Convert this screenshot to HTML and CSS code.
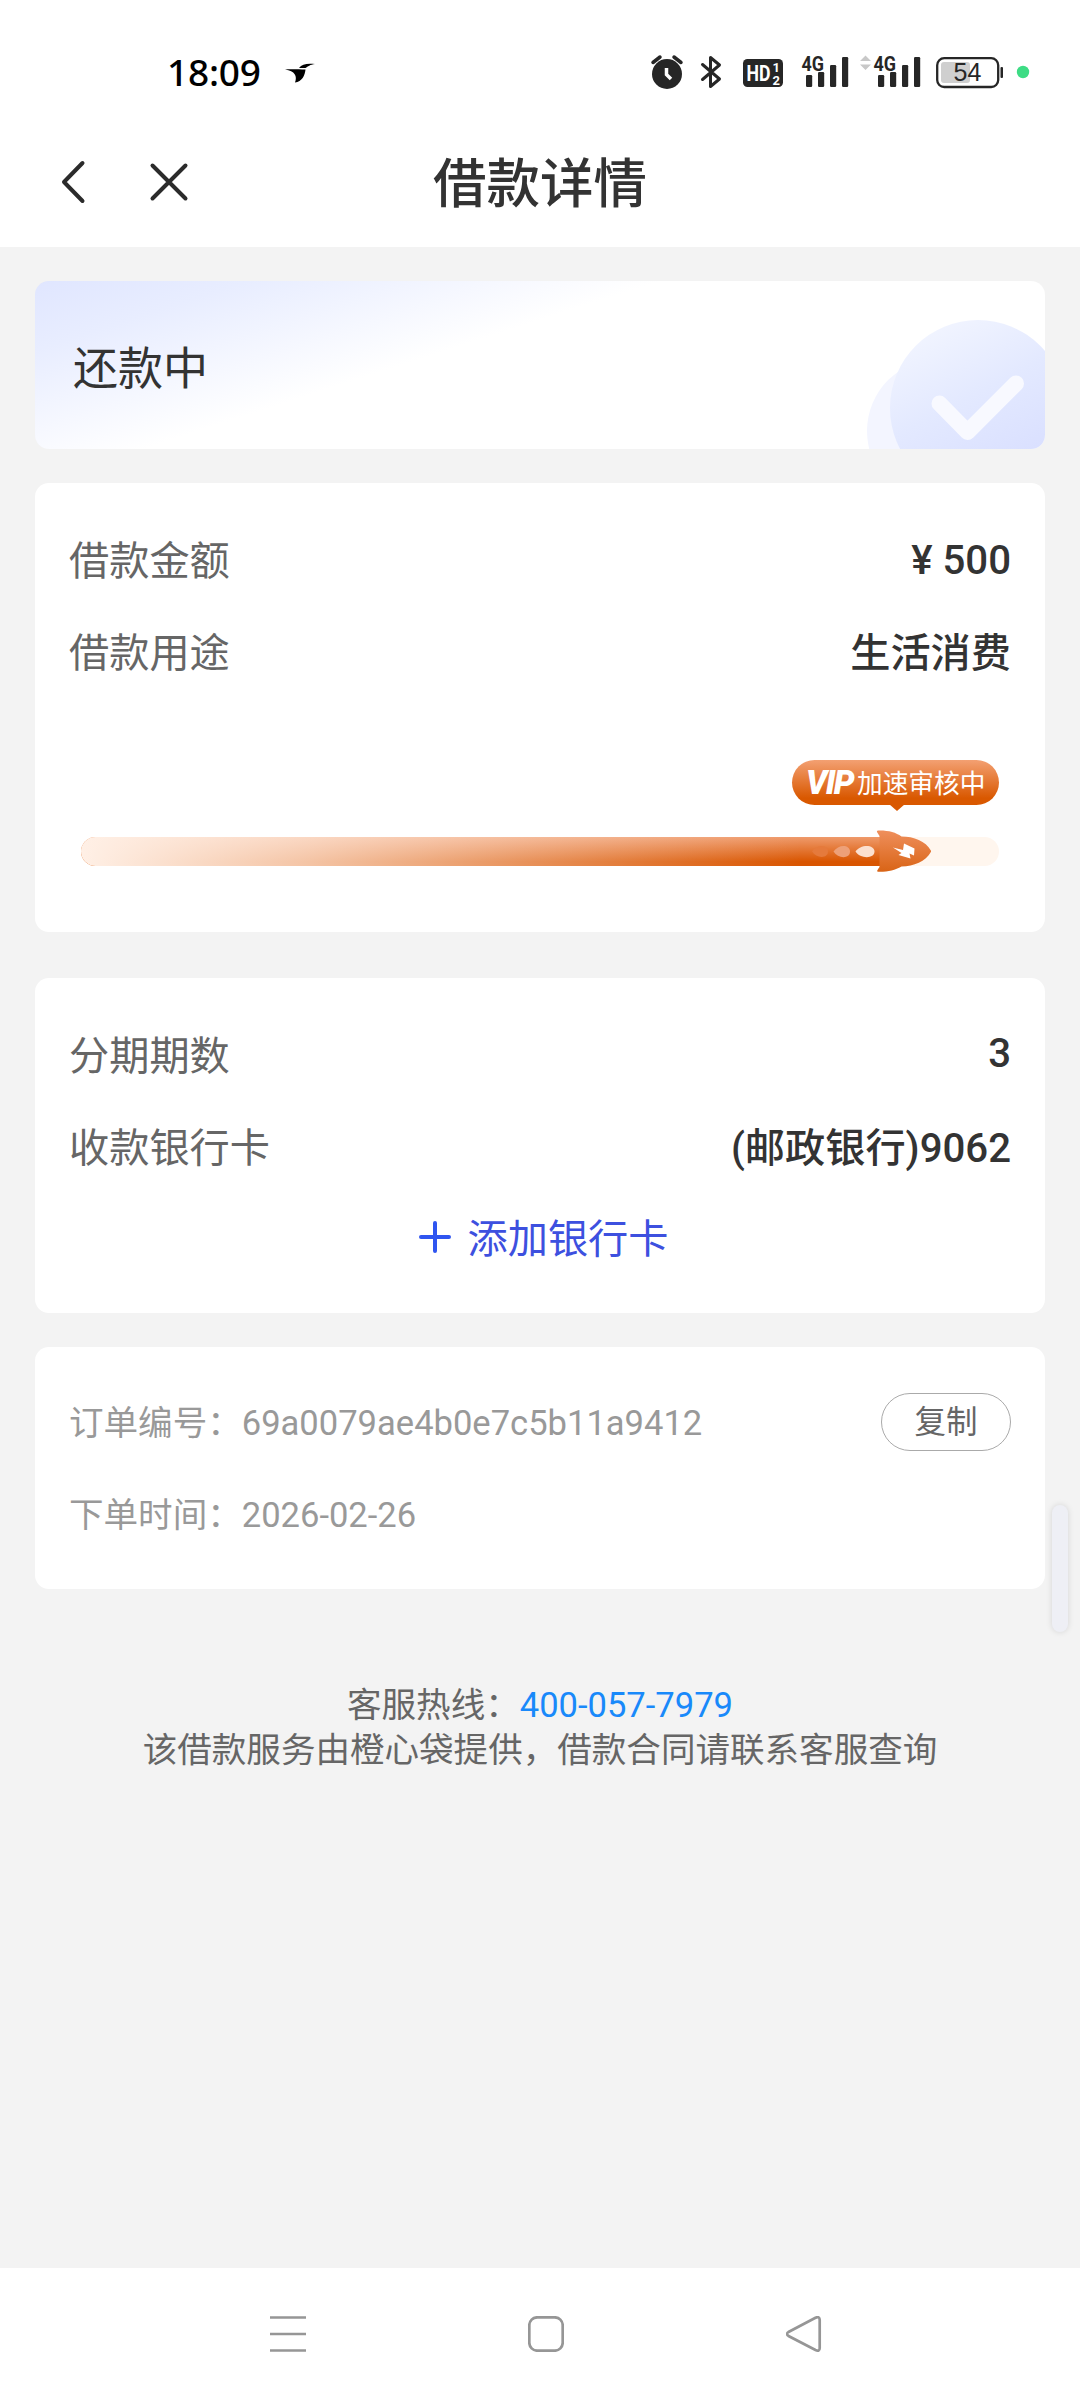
FILE: index.html
```html
<!DOCTYPE html>
<html lang="zh-CN">
<head>
<meta charset="utf-8">
<title>借款详情</title>
<link rel="stylesheet" href="styles.css">
</head>
<body>
<div class="status-bar">
  <div class="status-left">
    <span class="clock">18:09</span>
    <svg class="bird" width="30" height="20" viewBox="0 0 30 20"><path d="M0 6.500C6 6 14 6.500 20.500 6.500C20 12 17 19 10 19.500C12.500 13 10 8 0 6.500Z"/><path d="M14 5C17 1 22 .2 30 1C25 1.500 23 3.500 20.500 5Z"/></svg>
  </div>
  <svg class="status-icons" width="390" height="44" viewBox="645 50 390 44">
    <g fill="#262626">
      <circle cx="667" cy="74" r="15"/>
      <path d="M653 62.500L660 57M681 62.500L674 57" stroke="#262626" stroke-width="3.500" fill="none" stroke-linecap="round"/>
      <path d="M666.500 68V74.500L671 79" stroke="#fff" stroke-width="3.500" fill="none"/>
      <path d="M702.500 64.500L719.500 79L710.500 86.500V57.500L719.500 65L702.500 79.500" stroke="#262626" stroke-width="3" fill="none" stroke-linejoin="round" stroke-linecap="round"/>
      <rect x="743" y="59" width="40" height="28" rx="4.500"/>
      <text class="hd" x="746.500" y="81" textLength="24" lengthAdjust="spacingAndGlyphs">HD</text>
      <text class="hd-num" x="772.500" y="72">1</text>
      <text class="hd-num" x="772.500" y="84.500">2</text>
      <g id="signal">
        <text class="net" x="801.500" y="70.500" textLength="22.500" lengthAdjust="spacingAndGlyphs">4G</text>
        <rect x="806" y="75" width="6.200" height="12" rx="1.200"/><rect x="818" y="72" width="6.200" height="15" rx="1.200"/><rect x="830" y="65" width="6.200" height="22" rx="1.200"/><rect x="842" y="57" width="6.200" height="30" rx="1.200"/>
      </g>
      <use href="#signal" x="72"/>
      <path d="M860 61L865.500 55.500L871 61ZM860 64.500L865.500 70L871 64.500Z" fill="#c8c8c8"/>
      <rect x="941" y="62" width="29" height="21" rx="3" fill="#cfcfcf"/>
      <rect x="937.200" y="58.200" width="61" height="28.800" rx="7" fill="none" stroke="#262626" stroke-width="2.300"/>
      <rect x="1000.500" y="67" width="2.500" height="11" rx="1"/>
      <text class="batt" x="967.500" y="81.300" text-anchor="middle">54</text>
      <circle cx="1023" cy="72" r="6.200" fill="#3ddc84"/>
    </g>
  </svg>
</div>

<header class="nav">
  <div class="nav-actions">
    <svg width="26" height="44" viewBox="0 0 26 44"><path d="M22.500 3L4 22L22.500 41"/></svg>
    <svg width="40" height="40" viewBox="0 0 40 40"><path d="M3.500 3.500L36.500 36.500M36.500 3.500L3.500 36.500"/></svg>
  </div>
  <h1>借款详情</h1>
</header>

<main>
  <section class="banner">
    <span>还款中</span>
    <svg class="seal" width="180" height="168" viewBox="865 281 180 168">
      <defs>
        <linearGradient id="disc" x1="0.25" y1="0" x2="0.7" y2="0.85"><stop offset="0" stop-color="#f2f5ff"/><stop offset=".5" stop-color="#e3e9ff"/><stop offset="1" stop-color="#d9dfff"/></linearGradient>
      </defs>
      <circle cx="939" cy="431" r="72" fill="#f3f5ff"/>
      <circle cx="978" cy="408" r="88" fill="url(#disc)"/>
      <path d="M939.500 403.500L967.500 432L1016 383.500" fill="none" stroke="#f8f9ff" stroke-width="16" stroke-linecap="round" stroke-linejoin="round"/>
    </svg>
  </section>

  <section class="card loan">
    <div class="row"><span class="label">借款金额</span><span class="value num">¥ 500</span></div>
    <div class="row"><span class="label">借款用途</span><span class="value">生活消费</span></div>
    <div class="progress">
      <div class="bubble"><b>VIP</b><span>加速审核中</span></div>
      <div class="track"><div class="fill"></div></div>
      <svg class="rocket" width="120" height="44" viewBox="811 829 120 44">
        <defs><linearGradient id="hull" x1="0" y1="0" x2="0" y2="1"><stop offset="0" stop-color="#ef8f5c"/><stop offset="1" stop-color="#d96416"/></linearGradient></defs>
        <path d="M812 851.500C816 844.500 828 844 828 851.500S816 858.500 812 851.500Z" fill="#e57a3c"/>
        <path d="M833.500 851.500C838 844 850 844 850 851.500S838 859 833.500 851.500Z" fill="#eda078"/>
        <path d="M855.500 851.500C860 844 874.500 844 874.500 851.500S860 859 855.500 851.500Z" fill="#fbe0d0"/>
        <path d="M877 832C876.500 830.500 878 830.500 880 830.500C889 830.500 896 832.500 901.500 836.500C914 836.500 926 841 931.300 851.300C926 861.500 914 866.500 901.500 866.500C895 870 888 872 878.500 871.800C876 871.500 877.500 870 879.500 867V836Z" fill="url(#hull)"/>
        <path d="M893 847.500L903 850L904 843.500L914.500 848.500L914 855.500L909.500 853.500L910.500 858.500L898.500 855L901.500 853Z" fill="#fff"/>
      </svg>
    </div>
  </section>

  <section class="card bank">
    <div class="row"><span class="label">分期期数</span><span class="value num">3</span></div>
    <div class="row"><span class="label">收款银行卡</span><span class="value">(邮政银行)9062</span></div>
    <div class="add"><svg width="32" height="32" viewBox="0 0 32 32"><path d="M16 2V30M2 16H30"/></svg><span>添加银行卡</span></div>
  </section>

  <section class="card order">
    <div class="row"><span class="meta">订单编号：69a0079ae4b0e7c5b11a9412</span><button class="copy">复制</button></div>
    <div class="row"><span class="meta">下单时间：2026-02-26</span></div>
  </section>

  <footer>
    <p>客服热线：<a>400-057-7979</a></p>
    <p>该借款服务由橙心袋提供，借款合同请联系客服查询</p>
  </footer>
</main>

<div class="edge-handle"></div>

<nav class="system-nav">
  <svg width="36" height="36" viewBox="0 0 36 36"><path d="M0 1.500H36M0 18H36M0 34.500H36"/></svg>
  <svg width="36" height="36" viewBox="0 0 36 36"><rect x="1.300" y="1.300" width="33.400" height="33.400" rx="8"/></svg>
  <svg width="36" height="36" viewBox="0 0 36 36"><path d="M29.500 1.800Q33.700-.2 33.700 4V32Q33.700 36 29.500 34L2.500 20Q-.5 18 2.500 16Z"/></svg>
</nav>
</body>
</html>
```

FILE: styles.css
```css
* { box-sizing: border-box; margin: 0; padding: 0; }
body {
  display: flex;
  flex-direction: column;
  width: 1080px;
  height: 2400px;
  background: #f3f3f3;
  color: #333;
  font-family: Roboto, "Noto Sans CJK SC", sans-serif;
  overflow: hidden;
}
svg { display: block; flex: none; }

.status-bar {
  display: flex;
  justify-content: space-between;
  height: 116px;
  padding: 50px 45px 0 167px;
  background: #fff;
}
.status-left { display: flex; align-items: center; gap: 26px; height: 45px; }
.clock { padding-bottom: 2px; font: 500 37px/43px "Noto Sans", sans-serif; color: #000; letter-spacing: -0.200px; }
.bird { margin-left: -2px; }
.hd { font: 700 22px Roboto, sans-serif; fill: #fff; }
.hd-num { font: 700 13px Roboto, sans-serif; fill: #fff; }
.net { font: 700 21px Roboto, sans-serif; }
.batt { font: 400 25px "Liberation Sans", sans-serif; }

.nav {
  display: grid;
  grid-template-columns: 1fr auto 1fr;
  align-items: center;
  height: 131px;
  padding: 0 60px;
  background: #fff;
}
.nav-actions { display: flex; align-items: center; gap: 63px; }
.nav svg { fill: none; stroke: #2b2b2b; stroke-width: 4; stroke-linecap: round; stroke-linejoin: round; }
.nav h1 { padding-top: 7px; font-size: 53.500px; font-weight: 500; line-height: 80px; }

main { flex: 1; padding: 34px 35px 0; }
.banner {
  position: relative;
  display: flex;
  align-items: center;
  height: 168px;
  padding-left: 38px;
  border-radius: 14px;
  overflow: hidden;
  background: linear-gradient(162deg, #e0e6ff 0%, #e8edff 14%, #fff 41%) #fff;
  font-size: 45px;
}
.banner span { padding-top: 1px; }
.seal { position: absolute; right: 0; bottom: 0; }

.card { margin-top: 34px; padding: 0 34px 0 35px; border-radius: 14px; background: #fff; }
.row { display: flex; align-items: center; justify-content: space-between; height: 92px; }
.label, .value { padding-bottom: 5px; font-size: 40.200px; }
.label { margin-left: -1px; color: #666; }
.value { font-weight: 500; }
.value.num { padding-bottom: 0; }

.loan { height: 449px; padding-top: 31px; }
.progress { position: relative; margin: 62px 12px 0 11px; }
.bubble {
  position: relative;
  display: flex;
  align-items: center;
  width: 207px;
  height: 45px;
  margin-left: auto;
  padding-left: 14px;
  border-radius: 23px;
  background: linear-gradient(#f3a072, #d95800 85%);
  color: #fff;
  font-size: 25.700px;
  white-space: nowrap;
}
.bubble span { padding-bottom: 2px; }
.bubble::after {
  content: "";
  position: absolute;
  left: 97px;
  top: 44px;
  border: solid transparent;
  border-width: 7px 8px 0;
  border-top-color: #d95800;
}
.bubble b { width: 51px; font: italic 900 33px/45px Roboto, sans-serif; letter-spacing: -1.500px; }
.track { height: 29px; margin-top: 32px; border-radius: 15px; background: #fff6ee; overflow: hidden; }
.fill {
  width: 800px;
  height: 29px;
  background:
    linear-gradient(90deg, #fff0e6 0, rgba(255, 240, 230, .72) 28%, rgba(255, 240, 230, .4) 55%, rgba(255, 240, 230, 0) 90%),
    linear-gradient(#ef9a6b, #d95500 85%);
}
.rocket { position: absolute; right: 68px; bottom: -7px; }

.bank { margin-top: 46px; height: 335px; padding-top: 31px; }
.bank .value.num { padding-bottom: 3px; }
.add { display: flex; align-items: center; justify-content: center; gap: 17px; height: 88px; padding-left: 6px; color: #3d50df; font-size: 40.200px; }
.add span { padding-bottom: 4px; }
.add svg { stroke: #2f55f0; stroke-width: 4; stroke-linecap: round; }

.order { height: 242px; padding-top: 28px; color: #999; font-size: 34.560px; }
.meta { margin-left: -1px; padding-bottom: 3px; }
.copy {
  width: 130px;
  height: 58px;
  margin-top: 1px;
  padding-top: 1px;
  border: 1px solid #aaa;
  border-radius: 29px;
  background: #fff;
  color: #666;
  font: 31.500px/56px Roboto, "Noto Sans CJK SC", sans-serif;
}
footer { padding-top: 94px; text-align: center; color: #666; font-size: 34.560px; line-height: 45px; }
footer a { color: #1989fa; }

.edge-handle {
  position: absolute;
  left: 1052px;
  top: 1505px;
  width: 16px;
  height: 127px;
  border-radius: 8px;
  background: #eeeff5;
  box-shadow: 0 0 6px rgba(0, 0, 0, .13);
}
.system-nav {
  display: flex;
  justify-content: space-between;
  height: 132px;
  padding: 48px 258px 0 270px;
  background: #fff;
}
.system-nav svg { fill: none; stroke: #969696; stroke-width: 2.700; }
```
